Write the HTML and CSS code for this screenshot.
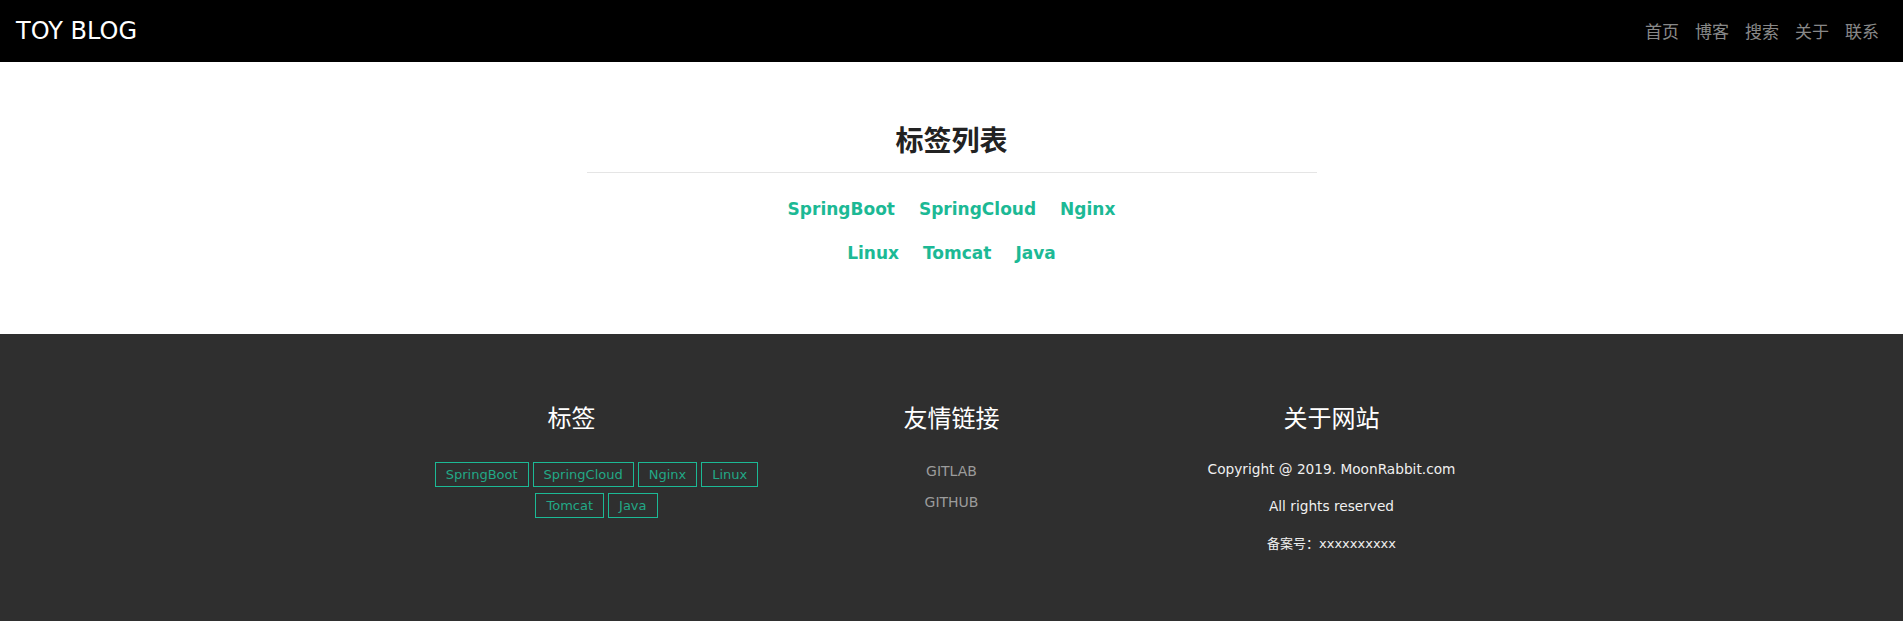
FILE: index.html
```html
<!DOCTYPE html>
<html lang="zh-CN">
<head>
<meta charset="utf-8">
<title>TOY BLOG</title>
<link rel="stylesheet" href="styles.css">
</head>
<body>
<header class="navbar">
  <a class="brand" href="#">TOY BLOG</a>
  <nav class="nav">
    <a href="#">首页</a>
    <a href="#">博客</a>
    <a href="#">搜索</a>
    <a href="#">关于</a>
    <a href="#">联系</a>
  </nav>
</header>
<main class="main">
  <h2 class="title">标签列表</h2>
  <hr class="divider">
  <div class="tag-list">
    <a href="#">SpringBoot</a>
    <a href="#">SpringCloud</a>
    <a href="#">Nginx</a>
    <a href="#">Linux</a>
    <a href="#">Tomcat</a>
    <a href="#">Java</a>
  </div>
</main>
<footer class="footer">
  <div class="container">
    <div class="col">
      <h3 class="col-title">标签</h3>
      <div class="ftags">
        <a href="#">SpringBoot</a>
        <a href="#">SpringCloud</a>
        <a href="#">Nginx</a>
        <a href="#">Linux</a>
        <a href="#">Tomcat</a>
        <a href="#">Java</a>
      </div>
    </div>
    <div class="col">
      <h3 class="col-title">友情链接</h3>
      <div class="links">
        <a href="#">GITLAB</a>
        <a href="#">GITHUB</a>
      </div>
    </div>
    <div class="col">
      <h3 class="col-title">关于网站</h3>
      <div class="about">
        <p>Copyright @ 2019. MoonRabbit.com</p>
        <p>All rights reserved</p>
        <p class="beian">备案号：xxxxxxxxxx</p>
      </div>
    </div>
  </div>
</footer>
</body>
</html>
```
FILE: styles.css
```css
* { box-sizing: border-box; }
body {
  margin: 0;
  font-family: "DejaVu Sans", "Noto Sans CJK SC", sans-serif;
  background: #fff;
}
a { text-decoration: none; }

.navbar {
  height: 62px;
  background: #000;
  display: flex;
  align-items: center;
  justify-content: space-between;
  padding: 0 16px;
}
.brand {
  color: #fff;
  font-size: 24px;
  line-height: 30px;
}
.nav { display: flex; }
.nav a {
  padding: 0 8px;
  font-family: "Noto Sans CJK SC", sans-serif;
  font-size: 17px;
  line-height: 24px;
  color: rgba(255, 255, 255, 0.55);
}

.main {
  padding: 60px 0 59px;
  text-align: center;
}
.title {
  margin: 0;
  font-family: "Noto Sans CJK SC", sans-serif;
  font-size: 28px;
  line-height: 34px;
  font-weight: 700;
  color: #222;
}
.divider {
  width: 730px;
  margin: 16px auto 0;
  border: 0;
  border-top: 1px solid #e5e5e5;
  height: 0;
}
.tag-list {
  width: 360px;
  margin: 14px auto 0;
  display: flex;
  flex-wrap: wrap;
  justify-content: center;
  column-gap: 24px;
  line-height: 44px;
}
.tag-list a {
  font-size: 17px;
  font-weight: 700;
  color: #1cb995;
}

.footer {
  background: #2f2f2f;
  min-height: 287px;
  padding: 68px 0 40px;
}
.container {
  width: 1140px;
  margin: 0 auto;
  display: grid;
  grid-template-columns: repeat(3, 380px);
}
.col {
  min-width: 0;
  padding: 0 15px;
  text-align: center;
}
.col-title {
  margin: 0;
  font-family: "Noto Sans CJK SC", sans-serif;
  font-size: 24px;
  line-height: 29px;
  font-weight: 400;
  color: #fff;
}
.ftags {
  width: 340px;
  margin: 31px 0 0 30px;
  display: flex;
  flex-wrap: wrap;
  justify-content: center;
  column-gap: 4px;
  row-gap: 6px;
}
.ftags a {
  padding: 3px 10px;
  border: 1px solid #1cb995;
  font-size: 13px;
  line-height: 17px;
  color: #22a886;
}
.links {
  margin-top: 25px;
  display: flex;
  flex-direction: column;
  align-items: center;
}
.links a {
  font-size: 14px;
  line-height: 30.5px;
  color: #9c9c9c;
}
.about { margin-top: 20px; }
.about p {
  margin: 0;
  font-size: 13.7px;
  line-height: 37px;
  color: #f0f0f0;
}
.about .beian { font-size: 13px; }
```
